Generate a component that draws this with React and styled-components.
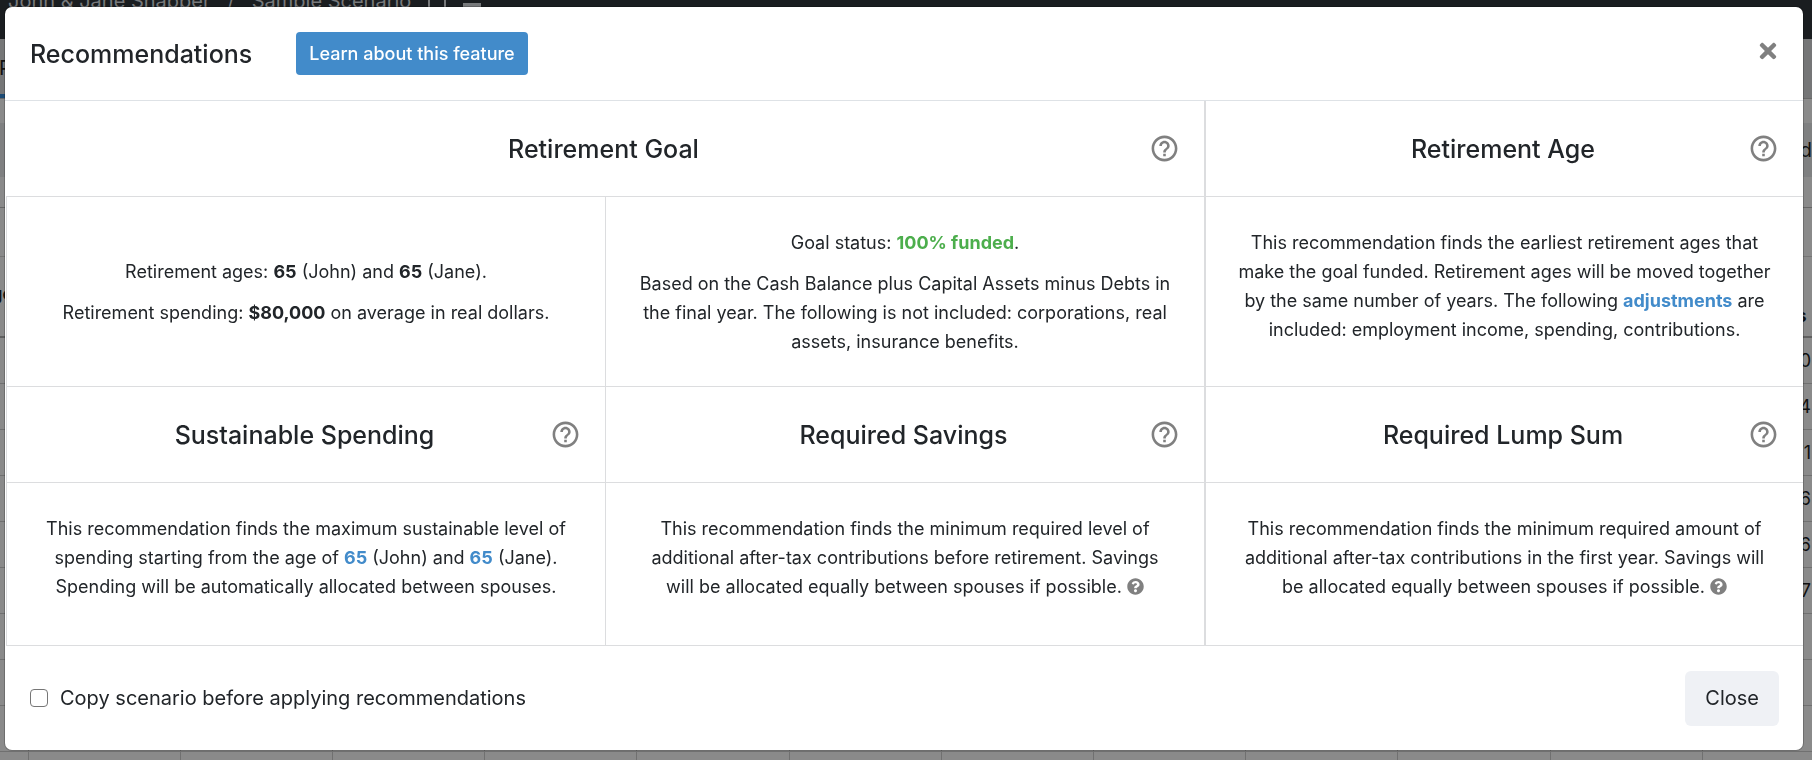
import React from 'react';
import styled, { createGlobalStyle } from 'styled-components';
import { FaQuestionCircle, FaTimes } from 'react-icons/fa';
import { MdHelpOutline } from 'react-icons/md';

const GlobalStyle = createGlobalStyle`
  * {
    box-sizing: border-box;
  }

  body {
    margin: 0;
    overflow: hidden;
    color: #212529;
    font-family: Inter, 'Liberation Sans', sans-serif;
  }
`;

const rows = ['120', '5,214', '3,171', '2,816', '9,166', '7', '', '', '', ''];
const columns = Array.from({ length: 12 }, (_, i) => i);

function Planner() {
  return (
    <Page aria-hidden="true">
      <Navbar>
        <span>John &amp; Jane Snapper</span>
        <span>/</span>
        <span>Sample Scenario</span>
        <NavBox />
        <NavMenu />
      </Navbar>
      <TabBar>
        <Tab>P</Tab>
      </TabBar>
      <Toolbar>d</Toolbar>
      <SubBar />
      <Sheet>
        <colgroup>
          <col width="28" />
          {columns.map((c) => (
            <col key={c} />
          ))}
        </colgroup>
        <thead>
          <FilterRow>
            <th colSpan="13" />
          </FilterRow>
          <HeadRow>
            <th>Age</th>
            {columns.map((c) => (
              <th key={c}>{c === 11 ? 'Assets' : ''}</th>
            ))}
          </HeadRow>
        </thead>
        <tbody>
          {rows.map((value, i) => (
            <Row key={i}>
              <td />
              {columns.map((c) => (
                <td key={c}>{c === 11 ? value : ''}</td>
              ))}
            </Row>
          ))}
        </tbody>
      </Sheet>
    </Page>
  );
}

function Heading({ title, wide, last }) {
  return (
    <HeadingCell $wide={wide} $last={last}>
      <h2>{title}</h2>
      <HelpButton type="button" aria-label={`About ${title}`}>
        <MdHelpOutline />
      </HelpButton>
    </HeadingCell>
  );
}

function App() {
  return (
    <>
      <GlobalStyle />
      <Planner />
      <Overlay>
        <Modal role="dialog" aria-modal="true" aria-labelledby="modal-title">
          <Header>
            <h1 id="modal-title">Recommendations</h1>
            <LearnButton type="button">Learn about this feature</LearnButton>
            <DismissButton type="button" aria-label="Dismiss">
              <FaTimes />
            </DismissButton>
          </Header>

          <Grid>
            <Heading title="Retirement Goal" wide />
            <Heading title="Retirement Age" last />

            <Cell $middle>
              <p>
                Retirement ages: <b>65</b> (John) and <b>65</b> (Jane).
              </p>
              <p>
                Retirement spending: <b>$80,000</b> on average in real dollars.
              </p>
            </Cell>
            <Cell>
              <p>
                Goal status: <Funded>100% funded</Funded>.
              </p>
              <p>
                Based on the Cash Balance plus Capital Assets minus Debts in the final year. The
                following is not included: corporations, real assets, insurance benefits.
              </p>
            </Cell>
            <Cell $last>
              <p>
                This recommendation finds the earliest retirement ages that make the goal funded.
                Retirement ages will be moved together by the same number of years. The following{' '}
                <TextLink href="#adjustments">adjustments</TextLink> are included: employment
                income, spending, contributions.
              </p>
            </Cell>

            <Heading title="Sustainable Spending" />
            <Heading title="Required Savings" />
            <Heading title="Required Lump Sum" last />

            <Cell>
              <p>
                This recommendation finds the maximum sustainable level of spending starting from
                the age of <TextLink href="#john">65</TextLink> (John) and{' '}
                <TextLink href="#jane">65</TextLink> (Jane). Spending will be automatically
                allocated between spouses.
              </p>
            </Cell>
            <Cell>
              <p>
                This recommendation finds the minimum required level of additional after-tax
                contributions before retirement. Savings will be allocated equally between spouses
                if possible. <InfoIcon />
              </p>
            </Cell>
            <Cell $last>
              <p>
                This recommendation finds the minimum required amount of additional after-tax
                contributions in the first year. Savings will be allocated equally between spouses
                if possible. <InfoIcon />
              </p>
            </Cell>
          </Grid>

          <Footer>
            <CopyLabel>
              <input type="checkbox" />
              Copy scenario before applying recommendations
            </CopyLabel>
            <CloseButton type="button">Close</CloseButton>
          </Footer>
        </Modal>
      </Overlay>
    </>
  );
}

// The planner behind the dialog, scrolled a little way down
const Page = styled.div`
  height: 100vh;
  margin-top: -30px;
  min-height: 790px;
  overflow: hidden;
  background: #8a8a8a;
  font-size: 18px;
`;

const Navbar = styled.div`
  display: flex;
  align-items: flex-start;
  gap: 17px;
  height: 69px;
  padding: 19px 8px;
  background: #1a1d20;
  color: #77797b;
  font-size: 20px;
  line-height: 24px;
`;

const NavBox = styled.span`
  width: 18px;
  height: 22px;
  border: 2px solid #77797b;
`;

const NavMenu = styled.span`
  width: 18px;
  height: 20px;
  border: solid #77797b;
  border-width: 3px 0;
  background: linear-gradient(#77797b, #77797b) 0 11px / 100% 3px no-repeat content-box;
`;

const TabBar = styled.div`
  display: flex;
  height: 60px;
  background: #757677;
  border-bottom: 1px solid #686868;
`;

const Tab = styled.span`
  width: 24px;
  padding-top: 17px;
  border-bottom: 4px solid #1d4b75;
  color: #111;
  font-size: 20px;
  line-height: 24px;
  text-indent: -1px;
`;

const Toolbar = styled.div`
  height: 54px;
  margin-top: 24px;
  background: #7f8081;
  color: #111;
  font-size: 20px;
  line-height: 54px;
  text-align: right;
`;

const SubBar = styled.div`
  height: 31px;
  border-bottom: 1px solid #666;
`;

const Sheet = styled.table`
  width: calc(100% + 43px);
  table-layout: fixed;
  border-collapse: collapse;
  color: #111;
  font-size: 18px;

  th,
  td {
    padding: 0 43px 0 0;
    text-align: right;
    white-space: nowrap;
  }
`;

const FilterRow = styled.tr`
  height: 48px;
  border-bottom: 1px solid #757575;
`;

const HeadRow = styled.tr`
  height: 81px;
  border-bottom: 2px solid #606060;

  th {
    padding: 0 48px 10px 0;
    vertical-align: bottom;
  }

  th:first-child {
    padding: 0 0 32px;
    text-align: left;
    text-indent: -22px;
  }
`;

const Row = styled.tr`
  height: 46px;

  td {
    border: 1px solid #707070;
    border-left: 0;
  }
`;

const Overlay = styled.div`
  position: fixed;
  inset: 0;
  padding: 7px 9px 0 5px;
`;

const Modal = styled.div`
  background: #fff;
  border-radius: 7px;
  box-shadow: 0 0 0 1px rgba(0, 0, 0, 0.2);
`;

const Header = styled.header`
  display: flex;
  align-items: center;
  gap: 44px;
  height: 94px;
  padding: 0 25px;
  border-bottom: 1px solid #dee2e6;

  h1 {
    margin: 0;
    font-size: 25px;
    font-weight: 500;
    line-height: 32px;
  }
`;

const LearnButton = styled.button`
  height: 43px;
  padding: 0 13px;
  border: 0;
  border-radius: 4px;
  background: #428bca;
  color: #fff;
  font: 500 18px Inter, sans-serif;
`;

const DismissButton = styled.button`
  display: flex;
  align-self: flex-start;
  margin: 32px -2px 0 auto;
  padding: 0;
  border: 0;
  background: none;
  color: #808080;
  font-size: 24px;
`;

const Grid = styled.div`
  display: grid;
  grid-template-columns: repeat(3, 1fr);
  margin-left: 1px;
`;

const HeadingCell = styled.div`
  display: flex;
  align-items: center;
  grid-column: span ${({ $wide }) => ($wide ? 2 : 1)};
  height: 96px;
  padding: 0 24px 0 52px;
  border-bottom: 1px solid #dcdddf;

  div + & {
    border-left: ${({ $last }) => ($last ? 2 : 1)}px solid #dcdddf;
  }

  h2 {
    flex: 1;
    margin: 0;
    font-size: 25px;
    font-weight: 500;
    line-height: 32px;
    text-align: center;
  }
`;

const HelpButton = styled.button`
  display: flex;
  padding: 0;
  border: 0;
  background: none;
  color: #808080;
  font-size: 31px;
`;

const Cell = styled.div`
  display: flex;
  flex-direction: column;
  justify-content: ${({ $middle }) => ($middle ? 'center' : 'flex-start')};
  gap: 12px;
  min-height: 163px;
  padding: 31px 32px 30px;
  border-bottom: 1px solid #dcdddf;
  border-left: ${({ $last }) => ($last ? 2 : 1)}px solid #dcdddf;
  font-size: 18px;
  line-height: 29px;
  text-align: center;

  p {
    margin: 0;
  }

  b {
    font-weight: 700;
  }
`;

const Funded = styled.b`
  color: #4cae4c;
`;

const TextLink = styled.a`
  color: #428bca;
  font-weight: 700;
  text-decoration: none;
`;

const InfoIcon = styled(FaQuestionCircle)`
  color: #808080;
  font-size: 17px;
  vertical-align: -2px;
`;

const Footer = styled.footer`
  display: flex;
  align-items: center;
  justify-content: space-between;
  height: 104px;
  padding: 0 24px 0 25px;
`;

const CopyLabel = styled.label`
  display: flex;
  align-items: center;
  gap: 12px;
  font-size: 20px;
  line-height: 30px;

  input {
    width: 18px;
    height: 18px;
    margin: 0;
    appearance: none;
    border: 1px solid #767676;
    border-radius: 4px;
    background: #fff;
  }
`;

const CloseButton = styled.button`
  height: 55px;
  padding: 0 20px;
  border: 0;
  border-radius: 6px;
  background: #eff1f5;
  color: #212529;
  font: 20px Inter, sans-serif;
`;

export default App;
